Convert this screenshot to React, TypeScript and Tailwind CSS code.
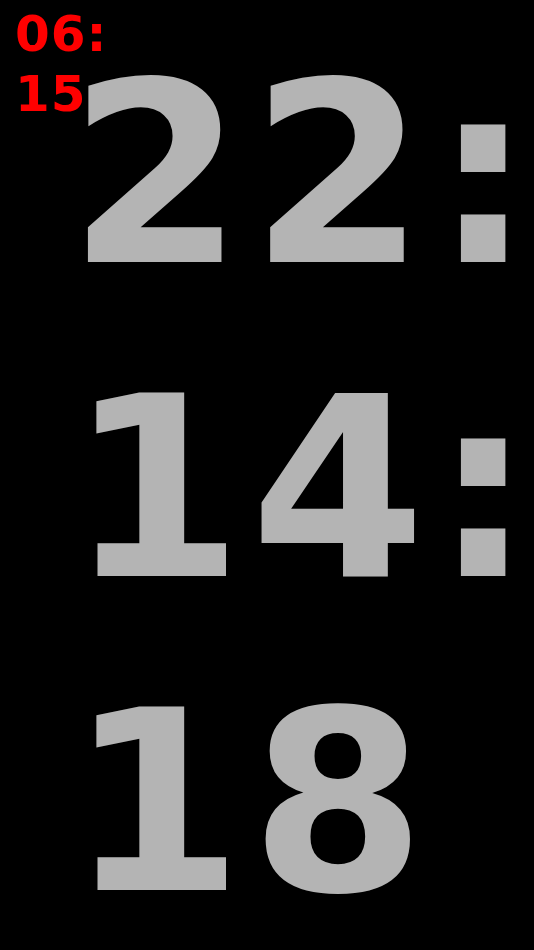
import React from "react";

export default function App() {
  const font = { fontFamily: '"DejaVu Sans", "Verdana", sans-serif' };
  return (
    <div className="relative h-[950px] w-full overflow-hidden bg-black" style={font}>
      <div className="flex flex-col pl-[68px] pt-[18px] text-[252px] font-bold leading-[314px] text-[#b4b4b4]">
        <div className="whitespace-nowrap">
          <span className="tracking-[7px]">22</span>
          <span>:</span>
        </div>
        <div className="whitespace-nowrap">
          <span className="tracking-[7px]">14</span>
          <span>:</span>
        </div>
        <div className="whitespace-nowrap">
          <span className="tracking-[7px]">18</span>
        </div>
      </div>
      <div className="absolute left-[15px] top-[4px] flex flex-col text-[50px] font-bold leading-[60px] tracking-[1px] text-[#ff0000]">
        <div>06:</div>
        <div>15</div>
      </div>
    </div>
  );
}
